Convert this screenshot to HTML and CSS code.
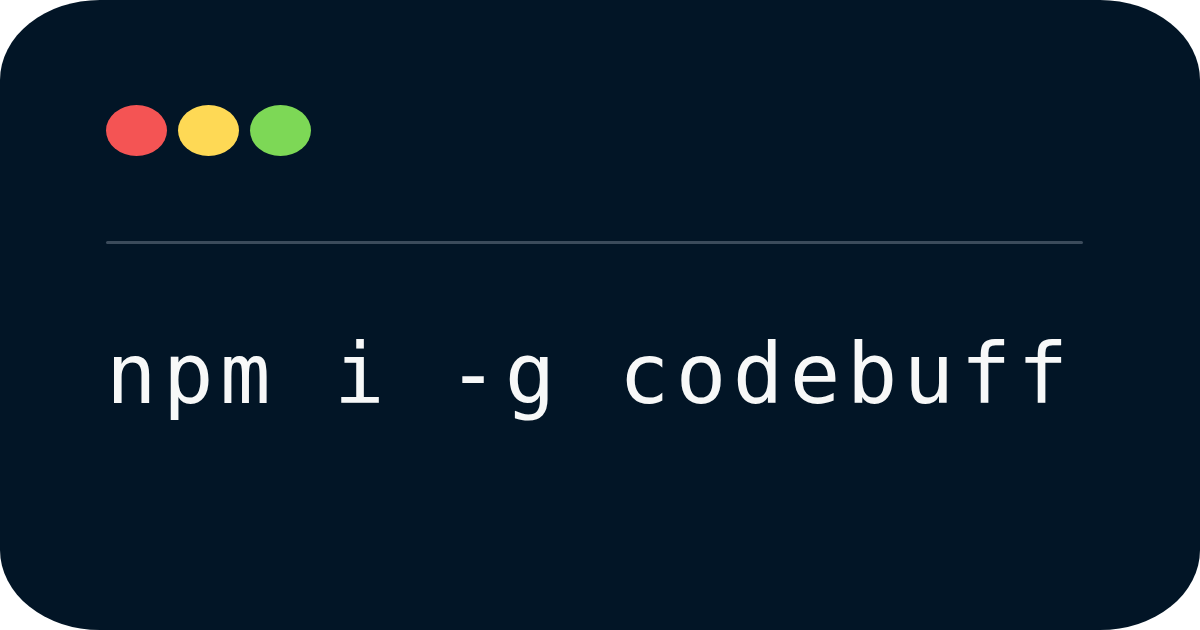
FILE: index.html
```html
<!DOCTYPE html>
<html>
<head>
<meta charset="utf-8">
<link rel="stylesheet" href="styles.css">
</head>
<body>
<div class="card">
  <div class="dots">
    <span class="dot red"></span>
    <span class="dot yellow"></span>
    <span class="dot green"></span>
  </div>
  <div class="rule"></div>
  <div class="cmd">npm i -g codebuff</div>
</div>
</body>
</html>
```
FILE: styles.css
```css
html, body {
  margin: 0;
  padding: 0;
  background: #ffffff;
}
.card {
  width: 1200px;
  height: 630px;
  box-sizing: border-box;
  background: #021526;
  border-radius: 100px / 80px;
  padding: 105px 117px 0 106px;
  display: flex;
  flex-direction: column;
}
.dots {
  display: flex;
  gap: 11px;
}
.dot {
  width: 61px;
  height: 51px;
  border-radius: 50%;
  display: block;
}
.red { background: #f45454; }
.yellow { background: #fed955; }
.green { background: #7dd856; }
.rule {
  margin-top: 85px;
  height: 3px;
  border-radius: 2px;
  background: #3b4b5b;
}
.cmd {
  margin-top: 80px;
  font-family: "DejaVu Sans Mono", monospace;
  font-size: 84px;
  line-height: 100px;
  letter-spacing: 6.4px;
  color: #f7f8f8;
  white-space: nowrap;
}
```
